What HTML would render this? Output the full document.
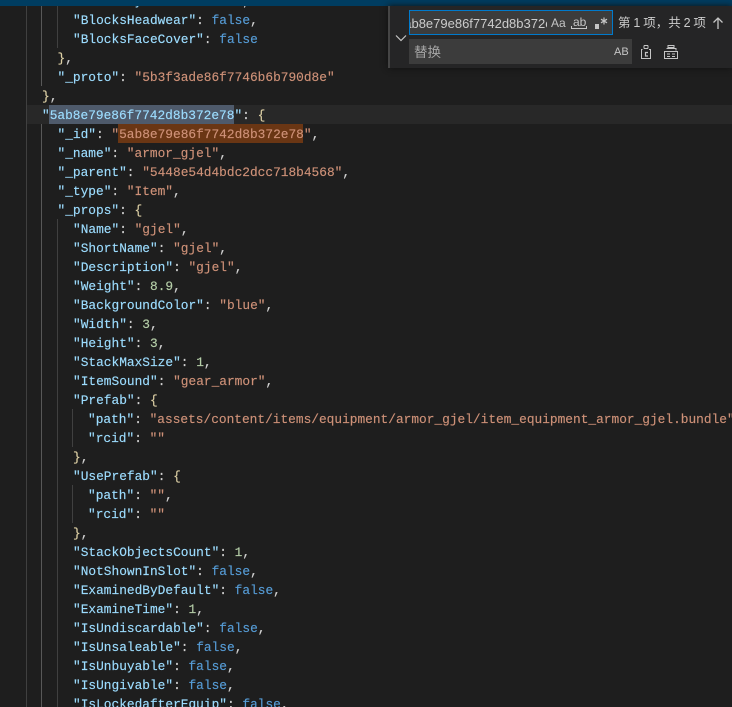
<!DOCTYPE html>
<html><head><meta charset="utf-8"><style>
html,body{margin:0;padding:0;background:#1e1e1e;width:732px;height:707px;overflow:hidden}
#e{position:absolute;left:0;top:0;width:732px;height:707px;overflow:hidden;font:12.83px/19px "Liberation Mono",monospace;color:#d4d4d4}
.l{position:absolute;white-space:pre;height:19px;margin-top:1px;-webkit-text-stroke:0.15px currentColor}
.k{color:#9cdcfe}.s{color:#ce9178}.b{color:#569cd6}.n{color:#b5cea8}.g{color:#dccfa4}
.v{position:absolute;width:1px;background:#404040}
.a{position:absolute}
.u{position:absolute;font-family:"Liberation Sans","Noto Sans CJK SC",sans-serif;white-space:pre}
</style></head><body><div id="e">
<div class="a" style="left:27px;top:105px;width:705px;height:19px;background:#282828"></div>
<div class="a" style="left:49px;top:105px;width:185px;height:19px;background:#4e5a6b"></div>
<div class="a" style="left:118px;top:124px;width:185px;height:19px;background:#6a3614"></div>
<div class="v" style="left:26px;top:0;height:707px"></div>
<div class="v" style="left:41px;top:0;height:86px;background:#585858"></div>
<div class="v" style="left:41px;top:124px;height:583px;background:#585858"></div>
<div class="v" style="left:57px;top:0;height:48px"></div>
<div class="v" style="left:57px;top:219px;height:488px"></div>
<div class="v" style="left:72px;top:409px;height:38px"></div>
<div class="v" style="left:72px;top:485px;height:38px"></div>
<div class="l" style="left:73px;top:-9px"><span class="k">"BlocksEyewear"</span>: <span class="b">false</span>,</div>
<div class="l" style="left:73px;top:10px"><span class="k">"BlocksHeadwear"</span>: <span class="b">false</span>,</div>
<div class="l" style="left:73px;top:29px"><span class="k">"BlocksFaceCover"</span>: <span class="b">false</span></div>
<div class="l" style="left:57.5px;top:48px"><span class="g">}</span>,</div>
<div class="l" style="left:57.5px;top:67px"><span class="k">"_proto"</span>: <span class="s">"5b3f3ade86f7746b6b790d8e"</span></div>
<div class="l" style="left:42px;top:86px"><span class="g">}</span>,</div>
<div class="l" style="left:42px;top:105px"><span class="k">"5ab8e79e86f7742d8b372e78"</span>: <span class="g">{</span></div>
<div class="l" style="left:57.5px;top:124px"><span class="k">"_id"</span>: <span class="s">"5ab8e79e86f7742d8b372e78"</span>,</div>
<div class="l" style="left:57.5px;top:143px"><span class="k">"_name"</span>: <span class="s">"armor_gjel"</span>,</div>
<div class="l" style="left:57.5px;top:162px"><span class="k">"_parent"</span>: <span class="s">"5448e54d4bdc2dcc718b4568"</span>,</div>
<div class="l" style="left:57.5px;top:181px"><span class="k">"_type"</span>: <span class="s">"Item"</span>,</div>
<div class="l" style="left:57.5px;top:200px"><span class="k">"_props"</span>: <span class="g">{</span></div>
<div class="l" style="left:73px;top:219px"><span class="k">"Name"</span>: <span class="s">"gjel"</span>,</div>
<div class="l" style="left:73px;top:238px"><span class="k">"ShortName"</span>: <span class="s">"gjel"</span>,</div>
<div class="l" style="left:73px;top:257px"><span class="k">"Description"</span>: <span class="s">"gjel"</span>,</div>
<div class="l" style="left:73px;top:276px"><span class="k">"Weight"</span>: <span class="n">8.9</span>,</div>
<div class="l" style="left:73px;top:295px"><span class="k">"BackgroundColor"</span>: <span class="s">"blue"</span>,</div>
<div class="l" style="left:73px;top:314px"><span class="k">"Width"</span>: <span class="n">3</span>,</div>
<div class="l" style="left:73px;top:333px"><span class="k">"Height"</span>: <span class="n">3</span>,</div>
<div class="l" style="left:73px;top:352px"><span class="k">"StackMaxSize"</span>: <span class="n">1</span>,</div>
<div class="l" style="left:73px;top:371px"><span class="k">"ItemSound"</span>: <span class="s">"gear_armor"</span>,</div>
<div class="l" style="left:73px;top:390px"><span class="k">"Prefab"</span>: <span class="g">{</span></div>
<div class="l" style="left:88px;top:409px"><span class="k">"path"</span>: <span class="s">"assets/content/items/equipment/armor_gjel/item_equipment_armor_gjel.bundle"</span>,</div>
<div class="l" style="left:88px;top:428px"><span class="k">"rcid"</span>: <span class="s">""</span></div>
<div class="l" style="left:73px;top:447px"><span class="g">}</span>,</div>
<div class="l" style="left:73px;top:466px"><span class="k">"UsePrefab"</span>: <span class="g">{</span></div>
<div class="l" style="left:88px;top:485px"><span class="k">"path"</span>: <span class="s">""</span>,</div>
<div class="l" style="left:88px;top:504px"><span class="k">"rcid"</span>: <span class="s">""</span></div>
<div class="l" style="left:73px;top:523px"><span class="g">}</span>,</div>
<div class="l" style="left:73px;top:542px"><span class="k">"StackObjectsCount"</span>: <span class="n">1</span>,</div>
<div class="l" style="left:73px;top:561px"><span class="k">"NotShownInSlot"</span>: <span class="b">false</span>,</div>
<div class="l" style="left:73px;top:580px"><span class="k">"ExaminedByDefault"</span>: <span class="b">false</span>,</div>
<div class="l" style="left:73px;top:599px"><span class="k">"ExamineTime"</span>: <span class="n">1</span>,</div>
<div class="l" style="left:73px;top:618px"><span class="k">"IsUndiscardable"</span>: <span class="b">false</span>,</div>
<div class="l" style="left:73px;top:637px"><span class="k">"IsUnsaleable"</span>: <span class="b">false</span>,</div>
<div class="l" style="left:73px;top:656px"><span class="k">"IsUnbuyable"</span>: <span class="b">false</span>,</div>
<div class="l" style="left:73px;top:675px"><span class="k">"IsUngivable"</span>: <span class="b">false</span>,</div>
<div class="l" style="left:73px;top:694px"><span class="k">"IsLockedafterEquip"</span>: <span class="b">false</span>,</div>

<div class="a" style="left:0;top:0;width:732px;height:6px;background:#003d61"></div>
<div class="a" style="left:388px;top:6px;width:344px;height:62px;background:#252526;box-shadow:0 0 6px #111"></div>
<div class="a" style="left:388px;top:6px;width:2px;height:62px;background:#454545"></div>
<svg class="a" style="left:394px;top:33px" width="14" height="10" viewBox="0 0 14 10"><path d="M2 2.5L7 7.5L12 2.5" fill="none" stroke="#c5c5c5" stroke-width="1.2"/></svg>

<div class="a" style="left:409px;top:10px;width:202px;height:23px;background:#3c3c3c;border:1px solid #007acc"></div>
<div class="a" style="left:410px;top:11px;width:137px;height:23px;overflow:hidden"><div class="u" style="left:-13px;top:4px;font-size:13px;line-height:18px;color:#ccc;font-family:'Liberation Sans',sans-serif">5ab8e79e86f7742d8b372e78</div></div>
<div class="u" style="left:551px;top:16px;font-size:12px;line-height:14px;color:#c5c5c5">Aa</div>
<div class="u" style="left:573px;top:15px;font-size:12px;line-height:14px;color:#c5c5c5">ab</div>
<svg class="a" style="left:570px;top:25px" width="18" height="5" viewBox="0 0 18 5"><path d="M1.5 1V3.5H16.5V1" fill="none" stroke="#c5c5c5" stroke-width="1"/></svg>
<div class="a" style="left:595px;top:24px;width:4px;height:5px;background:#c5c5c5"></div>
<svg class="a" style="left:599px;top:16px" width="10" height="10" viewBox="0 0 10 10"><path d="M5 1.5V8.5M2 3.2L8 6.8M8 3.2L2 6.8" fill="none" stroke="#c5c5c5" stroke-width="1.2"/></svg>
<div class="u" style="left:618px;top:14px;font-size:12.5px;line-height:18px;color:#ccc;word-spacing:-0.6px">第 1 项，共 2 项</div>
<svg class="a" style="left:711px;top:15px" width="14" height="16" viewBox="0 0 14 16"><path d="M7 14V3M2.5 7.5L7 3L11.5 7.5" fill="none" stroke="#c5c5c5" stroke-width="1.3"/></svg>

<div class="a" style="left:409px;top:39px;width:223px;height:25px;background:#3c3c3c"></div>
<div class="u" style="left:414px;top:44px;font-size:13.5px;line-height:18px;color:#a6a6a6">替换</div>
<div class="u" style="left:614px;top:46px;font-size:11px;line-height:12px;color:#c5c5c5">AB</div>
<svg class="a" style="left:639px;top:44px" width="14" height="16" viewBox="0 0 14 16" fill="none" stroke="#c5c5c5"><path d="M5 1.5H9M5 4.5H9M5 1.5V4.5M9 1.5V4.5"/><path d="M3.5 5.5H2.5V14.5H11.5V5.5H10"/><path d="M9 8.5H6.5V12H9" stroke-width="1.2"/></svg>
<svg class="a" style="left:663px;top:44px" width="16" height="16" viewBox="0 0 16 16" fill="none" stroke="#c5c5c5"><path d="M5 1.5H11V3.5H5Z"/><path d="M3.5 4.5H13V6.5"/><path d="M1.5 7.5H14.5V14.5H1.5Z"/><path d="M4 10H7M4 12.5H7M9 10H12M9 12.5H12" stroke-width="1"/></svg>
</div></body></html>
